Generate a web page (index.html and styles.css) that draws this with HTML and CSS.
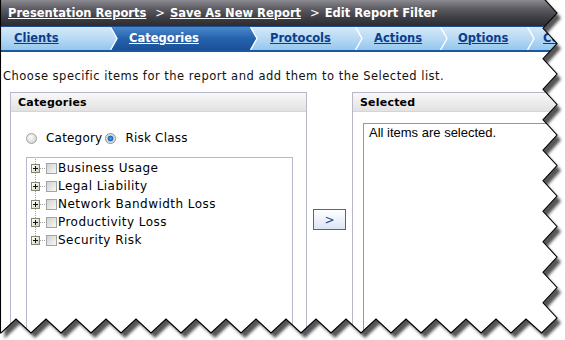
FILE: index.html
```html
<!DOCTYPE html>
<html lang="en">
<head>
  <meta charset="UTF-8">
  <title>Edit Report Filter</title>
  <link rel="stylesheet" href="styles.css">
</head>
<body>
  <div class="page">
    <!-- Breadcrumb bar -->
    <div class="crumbs">
      <a href="#">Presentation Reports</a><span class="gt">&gt;</span><a href="#">Save As New Report</a><span class="gt">&gt;</span>Edit Report Filter
    </div>

    <!-- Wizard steps -->
    <nav class="tabs">
      <a class="tab" href="#">Clients</a>
      <svg class="sep" width="8" height="23"><path d="M0,0 L8,0 L8,23 L0,23 L7,11.5 Z" fill="url(#activeGrad)"/><polyline points="0.5,0 7,11.5 0.5,23" fill="none" stroke="#fff" stroke-width="1.4"/></svg>
      <a class="tab active" href="#">Categories</a>
      <svg class="sep" width="8" height="23"><path d="M0,0 L0.5,0 L7,11.5 L0.5,23 L0,23 Z" fill="url(#activeGrad)"/><polyline points="0.5,0 7,11.5 0.5,23" fill="none" stroke="#fff" stroke-width="1.4"/></svg>
      <a class="tab" href="#">Protocols</a>
      <svg class="sep" width="8" height="23"><polyline points="0.5,0 7,11.5 0.5,23" fill="none" stroke="#fff" stroke-width="1.4"/></svg>
      <a class="tab" href="#">Actions</a>
      <svg class="sep" width="8" height="23"><polyline points="0.5,0 7,11.5 0.5,23" fill="none" stroke="#fff" stroke-width="1.4"/></svg>
      <a class="tab" href="#">Options</a>
      <svg class="sep" width="8" height="23"><polyline points="0.5,0 7,11.5 0.5,23" fill="none" stroke="#fff" stroke-width="1.4"/></svg>
      <a class="tab" href="#">Confirm</a>
    </nav>
    <svg class="defs" width="0" height="0">
      <defs>
        <linearGradient id="activeGrad" x1="0" y1="0" x2="0" y2="1">
          <stop offset="0" stop-color="#4a88cc"/>
          <stop offset="0.5" stop-color="#2562ad"/>
          <stop offset="1" stop-color="#1a5199"/>
        </linearGradient>
      </defs>
    </svg>

    <p class="intro">Choose specific items for the report and add them to the Selected list.</p>

    <div class="columns">
      <section class="panel cats">
        <div class="panel-head">Categories</div>
        <div class="panel-body">
          <div class="radios">
            <span class="radio"></span><span class="radio-label">Category</span>
            <span class="radio on"></span><span class="radio-label">Risk Class</span>
          </div>
          <div class="tree">
            <div class="node"><span class="exp"><span class="plus"></span></span><span class="twig"></span><span class="check"></span>Business Usage</div>
            <div class="node"><span class="exp"><span class="plus"></span></span><span class="twig"></span><span class="check"></span>Legal Liability</div>
            <div class="node"><span class="exp"><span class="plus"></span></span><span class="twig"></span><span class="check"></span>Network Bandwidth Loss</div>
            <div class="node"><span class="exp"><span class="plus"></span></span><span class="twig"></span><span class="check"></span>Productivity Loss</div>
            <div class="node"><span class="exp"><span class="plus"></span></span><span class="twig"></span><span class="check"></span>Security Risk</div>
          </div>
        </div>
      </section>

      <div class="mover">
        <button class="move-btn">&gt;</button>
      </div>

      <section class="panel selected">
        <div class="panel-head">Selected</div>
        <div class="list">All items are selected.</div>
      </section>
    </div>

    <!-- torn paper edge over the screenshot -->
    <svg class="torn" width="565" height="340" viewBox="0 0 565 340">
      <defs>
        <path id="pageShape" d="M0.5,-10 L540,-10 L543,-2.25 L557,13 L543,28.25 L557,43.5 L543,58.75 L557,74 L543,89.25 L557,104.5 L543,119.75 L557,135 L543,150.25 L557,165.5 L543,180.75 L557,196 L543,211.25 L557,226.5 L543,241.75 L557,257 L543,272.25 L557,287.5 L543,302.75 L557,318 L541.5,333 L526,319 L511,333 L496,319 L481,333 L466,319 L451,333 L436,319 L421,333 L406,319 L391,333 L376,319 L361,333 L346,319 L331,333 L316,319 L301,333 L286,319 L271,333 L256,319 L241,333 L226,319 L211,333 L196,319 L181,333 L166,319 L151,333 L136,319 L121,333 L106,319 L91,333 L76,319 L61,333 L46,319 L31,333 L16,319 L1,333 L0.5,333 Z"/>
        <mask id="outside">
          <rect width="565" height="340" fill="#fff"/>
          <use href="#pageShape" fill="#000"/>
        </mask>
        <filter id="soft" x="-5%" y="-5%" width="110%" height="110%">
          <feGaussianBlur stdDeviation="1.6"/>
        </filter>
      </defs>
      <g mask="url(#outside)">
        <rect width="565" height="340" fill="#fff"/>
        <use href="#pageShape" transform="translate(4 5)" fill="#555" filter="url(#soft)"/>
      </g>
      <use href="#pageShape" fill="none" stroke="#000" stroke-width="1.1"/>
    </svg>
  </div>
</body>
</html>
```

FILE: styles.css
```css
/* Base */
body {
  margin: 0;
  font-family: "DejaVu Sans", Verdana, sans-serif;
  background: #fff;
  color: #000;
}

.page {
  position: relative;
  width: 564px;
  height: 340px;
  padding-left: 1px;
  overflow: hidden;
  background: #fff;
}

/* Breadcrumb bar */
.crumbs {
  height: 26px;
  line-height: 26px;
  padding-left: 7px;
  background: linear-gradient(to bottom, #8a8a90 0, #5a5a60 35%, #3d3d43 70%, #2b2b30 100%);
  color: #fff;
  font-size: 11.5px;
  font-weight: bold;
  white-space: nowrap;
}
.crumbs a {
  color: #fff;
  text-decoration: underline;
}
.crumbs .gt {
  font-weight: normal;
  margin: 0 5px 0 9px;
}

/* Wizard step tabs */
.tabs {
  display: flex;
  height: 23px;
  border-top: 1px solid #1d4f91;
  border-bottom: 2px solid #1c58a2;
  background: linear-gradient(to bottom, #d4e9f9, #b4d8f3 55%, #93c6ee);
  white-space: nowrap;
}
.tab {
  box-sizing: border-box;
  flex: none;
  line-height: 23px;
  font-size: 11.5px;
  font-weight: bold;
  color: #0b3d8c;
  text-decoration: underline;
}
.tab:nth-of-type(1) { width: 109px; padding-left: 13px; }
.tab:nth-of-type(2) { width: 132px; padding-left: 11px; }
.tab:nth-of-type(3) { width: 97px;  padding-left: 12px; }
.tab:nth-of-type(4) { width: 77px;  padding-left: 11px; }
.tab:nth-of-type(5) { width: 79px;  padding-left: 10px; }
.tab:nth-of-type(6) { padding-left: 8px; }
.tab.active {
  color: #fff;
  background: linear-gradient(to bottom, #4a88cc, #2562ad 50%, #1a5199);
}
.sep {
  display: block;
  flex: none;
}
.defs {
  display: block;
  width: 0;
  height: 0;
}

/* Intro line */
.intro {
  margin: 0 0 8px;
  padding: 16px 0 0 2px;
  line-height: 16px;
  font-size: 11.5px;
  letter-spacing: 0.5px;
  color: #111;
  white-space: nowrap;
}

/* Two list panels */
.columns {
  display: flex;
  padding-left: 9px;
}
.panel {
  box-sizing: border-box;
  flex: none;
  height: 260px;
  border: 1px solid #b5b9c9;
}
.panel.cats { width: 297px; }
.panel.selected { width: 250px; }

.panel-head {
  height: 17px;
  line-height: 17px;
  padding: 1px 0 0 7px;
  border-bottom: 1px solid #d4d4dc;
  background: linear-gradient(to bottom, #f8f8f8, #e2e2e2);
  font-size: 11px;
  font-weight: bold;
  letter-spacing: 0.2px;
}

.panel-body {
  padding: 18px 0 0 15px;
}

/* Radio choice */
.radios {
  display: flex;
  align-items: center;
  height: 16px;
  margin-bottom: 11px;
  font-size: 12px;
  letter-spacing: 0.2px;
}
.radio {
  box-sizing: border-box;
  width: 11px;
  height: 11px;
  border-radius: 50%;
  border: 1px solid #a2a2a2;
  background: radial-gradient(circle at 40% 35%, #fdfdfd, #d6d6d6 75%);
}
.radio.on {
  border-color: #8e8e8e;
  background: radial-gradient(circle at 50% 50%, #55aaf0 0, #1060b8 2.5px, #d4d4d4 3.2px, #f0f0f0 5px);
}
.radio + .radio-label { margin-left: 9px; }
.radio-label + .radio { margin-left: 3px; }

/* Category tree */
.tree {
  box-sizing: border-box;
  width: 267px;
  height: 200px;
  padding-top: 1px;
  border: 1px solid #b5b9c9;
}
.node {
  display: flex;
  align-items: center;
  height: 18px;
  padding-left: 4px;
  font-size: 12px;
  letter-spacing: 0.45px;
  white-space: nowrap;
}
.exp {
  display: flex;
  align-items: center;
  width: 9px;
  height: 18px;
  background: repeating-linear-gradient(to bottom, #a0a0a0 0 1px, transparent 1px 2px) center top / 1px 100% no-repeat;
}
.node:last-child .exp {
  background-size: 1px 50%;
}
.plus {
  box-sizing: border-box;
  width: 9px;
  height: 9px;
  border: 1px solid #7f8a6c;
  background:
    linear-gradient(#111, #111) center / 5px 1px no-repeat,
    linear-gradient(#111, #111) center / 1px 5px no-repeat,
    linear-gradient(135deg, #ffffff, #d4d0c0);
}
.twig {
  width: 6px;
  height: 1px;
  background: repeating-linear-gradient(to right, #a0a0a0 0 1px, transparent 1px 2px);
}
.check {
  box-sizing: border-box;
  width: 11px;
  height: 11px;
  margin-right: 1px;
  border: 1px solid #a4a4a4;
  background: linear-gradient(135deg, #d2d2d2, #f7f7f7);
}

/* Move button */
.mover {
  flex: none;
  width: 45px;
}
.move-btn {
  display: block;
  box-sizing: border-box;
  width: 33px;
  height: 21px;
  margin: 117px 0 0 6px;
  padding: 0;
  border: 1px solid #3d6ca3;
  background: linear-gradient(to bottom, #ffffff, #dce5f3);
  color: #1c4a8c;
  font-family: "DejaVu Sans", Verdana, sans-serif;
  font-size: 12px;
}

/* Selected list */
.list {
  box-sizing: border-box;
  height: 220px;
  margin: 11px 0 0 10px;
  padding: 2px 0 0 5px;
  border: 1px solid #7f9db9;
  font-family: "Liberation Sans", Arial, sans-serif;
  font-size: 13px;
  line-height: 14px;
  white-space: nowrap;
}

/* Torn screenshot edge */
.torn {
  position: absolute;
  top: 0;
  left: 0;
  pointer-events: none;
}
```
